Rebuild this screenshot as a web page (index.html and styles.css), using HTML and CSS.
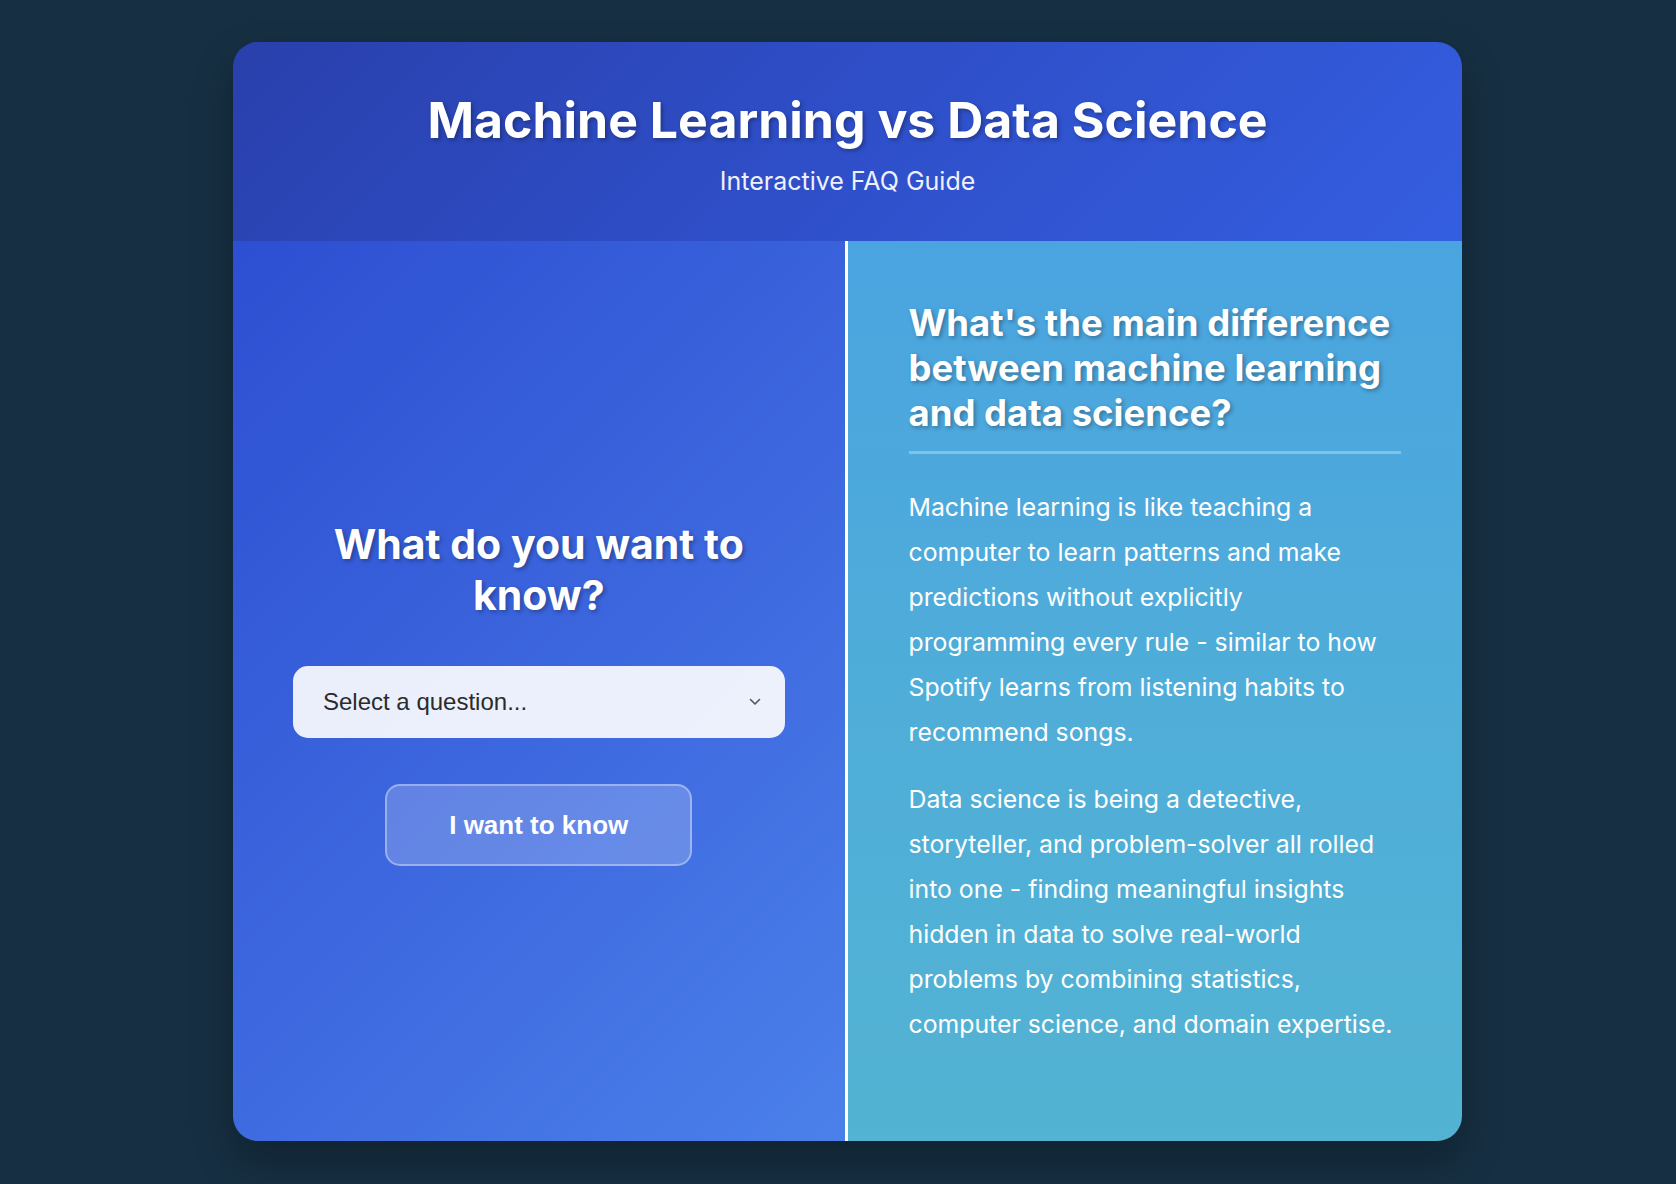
FILE: index.html
```html
<!DOCTYPE html>
<html lang="en">
<head>
<meta charset="utf-8">
<title>Machine Learning vs Data Science</title>
<link rel="stylesheet" href="styles.css">
</head>
<body>
<main class="card">
  <header class="card-header">
    <h1 class="title">Machine Learning vs Data Science</h1>
    <p class="subtitle">Interactive FAQ Guide</p>
  </header>
  <div class="panels">
    <section class="ask-panel">
      <h2 class="ask-title">What do you want to know?</h2>
      <div class="select-box">
        <span class="select-text">Select a question...</span>
        <svg class="chevron" width="12" height="8" viewBox="0 0 12 8" aria-hidden="true"><path d="M1.5 1.5 L6 6 L10.5 1.5" fill="none" stroke="#555" stroke-width="1.6" stroke-linecap="round" stroke-linejoin="round"/></svg>
      </div>
      <button class="know-btn" type="button">I want to know</button>
    </section>
    <section class="answer-panel">
      <h2 class="answer-title">What's the main difference between machine learning and data science?</h2>
      <p class="answer-text">Machine learning is like teaching a computer to learn patterns and make predictions without explicitly programming every rule - similar to how Spotify learns from listening habits to recommend songs.</p>
      <p class="answer-text">Data science is being a detective, storyteller, and problem-solver all rolled into one - finding meaningful insights hidden in data to solve real-world problems by combining statistics, computer science, and domain expertise.</p>
    </section>
  </div>
</main>
</body>
</html>
```

FILE: styles.css
```css
* { box-sizing: border-box; }

html, body { margin: 0; }

body {
  background: #162f42;
  padding: 42px 214px 43px 233px;
  font-family: Inter, "Noto Sans", "Liberation Sans", sans-serif;
  color: #ffffff;
}

.card {
  border-radius: 25px;
  overflow: hidden;
  height: 1099px;
  display: flex;
  flex-direction: column;
  box-shadow: 0 20px 40px rgba(0, 0, 0, 0.25);
}

.card-header {
  background: linear-gradient(135deg, #2940ac 0%, #2f4fc9 50%, #345ee0 100%);
  text-align: center;
  padding: 48px 20px 0;
  height: 199px;
}

.title {
  margin: 0;
  font-size: 50px;
  line-height: 60px;
  font-weight: 700;
  text-shadow: 2px 2px 4px rgba(0, 0, 0, 0.3);
}

.subtitle {
  margin: 16px 0 0;
  font-size: 25px;
  line-height: 30px;
  font-weight: 400;
  opacity: 0.92;
}

.panels {
  flex: 1;
  display: grid;
  grid-template-columns: 1fr 1fr;
}

.ask-panel {
  background: linear-gradient(135deg, #2d4fd2 0%, #3c66de 50%, #4b80ea 100%);
  border-right: 3px solid #ffffff;
  display: flex;
  flex-direction: column;
  align-items: center;
  justify-content: center;
  padding: 2px 60px 0;
}

.ask-title {
  margin: 0 0 45px;
  font-size: 41px;
  line-height: 51px;
  font-weight: 700;
  text-align: center;
  text-shadow: 2px 2px 4px rgba(0, 0, 0, 0.3);
}

.select-box {
  width: 100%;
  height: 72px;
  background: rgba(255, 255, 255, 0.9);
  border-radius: 15px;
  display: flex;
  align-items: center;
  justify-content: space-between;
  padding: 0 24px 0 30px;
  margin-bottom: 46px;
}

.select-text {
  font-family: "Liberation Sans", Arial, sans-serif;
  font-size: 24px;
  color: #2b2b2b;
}

.chevron { display: block; }

.know-btn {
  font-family: "Liberation Sans", Arial, sans-serif;
  font-size: 26px;
  font-weight: 700;
  line-height: 30px;
  color: #ffffff;
  background: rgba(255, 255, 255, 0.2);
  border: 2px solid rgba(255, 255, 255, 0.35);
  border-radius: 15px;
  padding: 24px 62px;
  cursor: pointer;
}

.answer-panel {
  background: linear-gradient(180deg, #4aa4e0 0%, #4fadd9 50%, #53b3d2 100%);
  padding: 60px 61px 40px 61px;
}

.answer-title {
  margin: 0 0 31px;
  padding-bottom: 15px;
  border-bottom: 3px solid rgba(255, 255, 255, 0.3);
  font-size: 36.5px;
  line-height: 45px;
  font-weight: 700;
  text-shadow: 2px 2px 4px rgba(0, 0, 0, 0.3);
}

.answer-text {
  margin: 0 0 23px;
  font-size: 24.8px;
  line-height: 44.9px;
  font-weight: 400;
}
```
